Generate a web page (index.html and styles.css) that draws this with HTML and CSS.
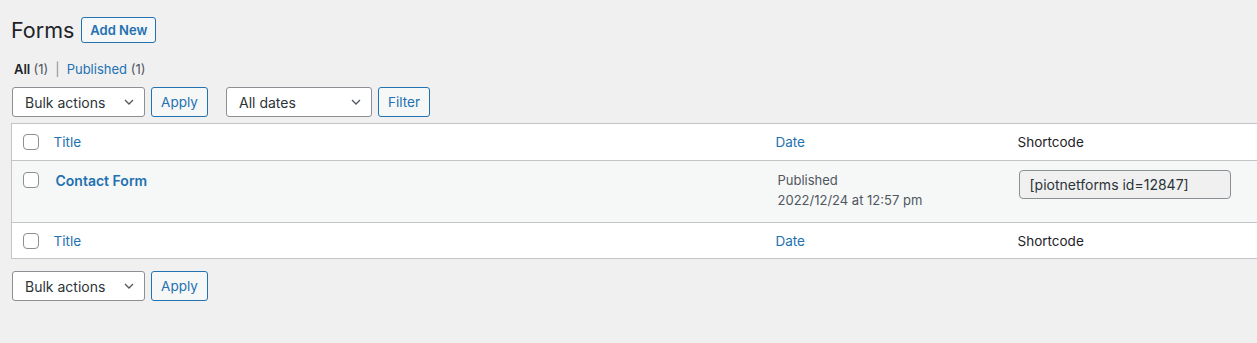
FILE: index.html
```html
<!DOCTYPE html>
<html lang="en">
<head>
<meta charset="utf-8">
<title>Forms</title>
<link rel="stylesheet" href="styles.css">
</head>
<body>
<div class="wrap">
  <div class="heading">
    <h1 class="page-title">Forms</h1>
    <a class="btn btn-add" href="#">Add New</a>
  </div>
  <ul class="subsubsub">
    <li><a class="current" href="#">All <span class="count">(1)</span></a></li>
    <li class="sep">|</li>
    <li><a href="#">Published <span class="count">(1)</span></a></li>
  </ul>
  <div class="tablenav">
    <div class="select sel-bulk"><span>Bulk actions</span><svg class="chev" viewBox="0 0 20 20" width="16" height="16"><path d="M5 7.5l5 5 5-5" fill="none" stroke="#50575e" stroke-width="1.6"/></svg></div>
    <button class="btn btn-apply">Apply</button>
    <div class="select sel-dates"><span>All dates</span><svg class="chev" viewBox="0 0 20 20" width="16" height="16"><path d="M5 7.5l5 5 5-5" fill="none" stroke="#50575e" stroke-width="1.6"/></svg></div>
    <button class="btn btn-filter">Filter</button>
  </div>
  <table class="list">
    <colgroup><col class="c-cb"><col class="c-title"><col class="c-date"><col class="c-code"></colgroup>
    <thead>
      <tr class="head">
        <td class="cb"><span class="checkbox"></span></td>
        <th><a href="#">Title</a></th>
        <th><a href="#">Date</a></th>
        <th class="plain">Shortcode</th>
      </tr>
    </thead>
    <tbody>
      <tr class="row">
        <td class="cb"><span class="checkbox"></span></td>
        <td class="title"><a href="#">Contact Form</a></td>
        <td class="date">Published<br>2022/12/24 at 12:57 pm</td>
        <td class="code"><div class="code-input">[piotnetforms id=12847]</div></td>
      </tr>
    </tbody>
    <tfoot>
      <tr class="foot">
        <td class="cb"><span class="checkbox"></span></td>
        <th><a href="#">Title</a></th>
        <th><a href="#">Date</a></th>
        <th class="plain">Shortcode</th>
      </tr>
    </tfoot>
  </table>
  <div class="tablenav bottom">
    <div class="select sel-bulk"><span>Bulk actions</span><svg class="chev" viewBox="0 0 20 20" width="16" height="16"><path d="M5 7.5l5 5 5-5" fill="none" stroke="#50575e" stroke-width="1.6"/></svg></div>
    <button class="btn btn-apply">Apply</button>
  </div>
</div>
</body>
</html>
```
FILE: styles.css
```css
html, body {
  margin: 0;
  padding: 0;
  background: #f0f0f1;
  overflow: hidden;
}
body {
  font-family: Inter, "Liberation Sans", sans-serif;
  font-size: 13px;
  color: #3c434a;
}
a { color: #2271b1; text-decoration: none; }
.wrap {
  padding: 17px 0 0 11px;
}
.heading {
  display: flex;
  align-items: center;
  gap: 7px;
  height: 26px;
}
.page-title {
  margin: 0;
  font-size: 21.5px;
  font-weight: 400;
  color: #1d2327;
  line-height: 26px;
}
.btn {
  box-sizing: border-box;
  font-family: inherit;
  font-size: 13px;
  color: #2271b1;
  border: 1px solid #2271b1;
  background: #f6f7f7;
  border-radius: 3px;
  display: inline-flex;
  align-items: center;
  justify-content: center;
  cursor: pointer;
}
.btn-add {
  height: 26px;
  width: 75px;
  font-weight: 600;
}
.subsubsub {
  list-style: none;
  margin: 0;
  padding: 0;
  display: flex;
  gap: 7px;
  margin-top: 18px;
  margin-left: 3px;
  line-height: 16px;
  font-size: 13px;
}
.subsubsub .current { color: #1d2327; font-weight: 600; }
.subsubsub .count { color: #50575e; font-weight: 400; }
.subsubsub .sep { color: #8c8f94; }
.tablenav {
  display: flex;
  align-items: center;
  gap: 6px;
  margin-top: 10px;
  margin-left: 1px;
  height: 30px;
}
.select {
  box-sizing: border-box;
  height: 30px;
  border: 1px solid #8c8f94;
  border-radius: 3px;
  background: #fff;
  display: flex;
  align-items: center;
  justify-content: space-between;
  padding: 0 7px 0 12px;
  font-size: 14px;
  color: #2c3338;
}
.sel-bulk { width: 133px; }
.sel-dates { width: 146px; margin-left: 12px; }
.btn-apply { width: 57px; height: 30px; font-size: 13.5px; }
.btn-filter { width: 52px; height: 30px; font-size: 13.5px; }
.list {
  margin-top: 6px;
  border-collapse: collapse;
  table-layout: fixed;
  width: 1270px;
  background: #fff;
  border: 1px solid #c3c4c7;
}
.c-cb { width: 32px; }
.c-title { width: 722px; }
.c-date { width: 242px; }
.c-code { width: 274px; }
.list th, .list td {
  text-align: left;
  font-weight: 400;
  padding: 0 10px;
  vertical-align: middle;
}
.list .cb { padding: 0 0 0 11px; }
.head { height: 37px; }
.foot { height: 36px; }
.head th, .head td { border-bottom: 1px solid #c3c4c7; }
.foot th, .foot td { border-top: 1px solid #c3c4c7; }
.list th { font-size: 13.5px; }
.list th.plain { color: #1d2327; }
.row { height: 62px; }
.row td {
  background: #f6f7f7;
  vertical-align: top;
}
.checkbox {
  display: block;
  box-sizing: border-box;
  width: 16px;
  height: 16px;
  border: 1px solid #8c8f94;
  border-radius: 4px;
  background: #fff;
}
.row .cb { padding-top: 11px; }
.row .title { padding: 11px 12px 0; }
.row .title a { font-size: 14px; font-weight: 600; }
.row .date {
  padding: 9px 12px 0;
  line-height: 20px;
  color: #50575e;
  font-size: 13px;
}
.row .code { padding: 9px 11px 0; }
.code-input {
  box-sizing: border-box;
  width: 212px;
  height: 29px;
  border: 1px solid #8c8f94;
  border-radius: 4px;
  background: #f0f0f1;
  color: #2c3338;
  font-size: 14px;
  display: flex;
  align-items: center;
  padding-left: 10px;
}
.tablenav.bottom { margin-top: 12px; }
```
